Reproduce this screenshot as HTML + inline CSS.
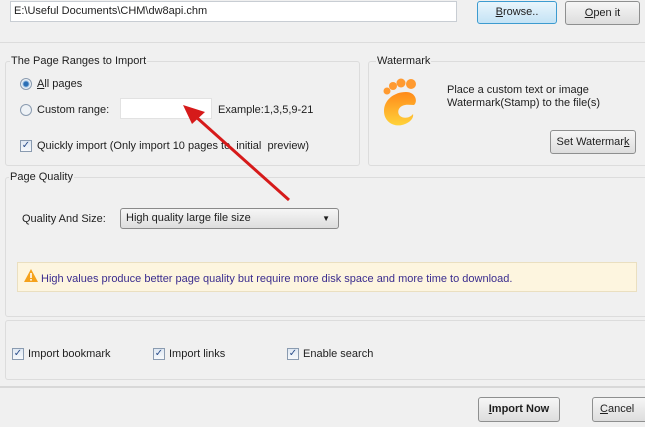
<!DOCTYPE html>
<html><head><meta charset="utf-8"><style>
*{box-sizing:border-box;margin:0;padding:0}
body{width:645px;height:427px;background:#f0f0f0;font-family:"Liberation Sans",sans-serif;font-size:11px;color:#1e1e1e;position:relative;overflow:hidden}
.a{position:absolute}
.box{position:absolute;border:1px solid #dcdcdc;border-radius:3px;background:#f0f0f0}
.btn{position:absolute;border:1px solid #8e8f8f;border-radius:3px;background:linear-gradient(#f6f6f6,#dddddd);text-align:center;font-size:11px}
.inp{position:absolute;background:#fff;border:1px solid #c8cdd3}
.cb{position:absolute;width:12px;height:12px;border:1px solid #8a9bb0;background:linear-gradient(#dfe8f3,#f7f9fb);font-size:10px;line-height:10px;text-align:center;color:#2a4d8a}
.rd{position:absolute;width:12px;height:12px;border:1px solid #8a9bb0;border-radius:50%;background:#eef2f6}
.t{position:absolute;white-space:nowrap}
</style></head><body>
<div class="box" style="left:-3px;top:-5px;width:660px;height:48px"></div>
<div class="inp" style="left:10px;top:1px;width:447px;height:21px"></div>
<div class="t" style="left:14px;top:5px">E:\Useful Documents\CHM\dw8api.chm</div>
<div class="btn" style="left:477px;top:1px;width:80px;height:23px;border-color:#3c9bd0;line-height:21px;background:linear-gradient(#e9f5fc,#c4e3f5)"><u>B</u>rowse..</div>
<div class="btn" style="left:565px;top:1px;width:75px;height:24px;line-height:22px"><u>O</u>pen it</div>

<div class="box" style="left:5px;top:61px;width:355px;height:105px"></div>
<div class="t" style="left:10px;top:55px;background:#f0f0f0;padding:0 1px">The Page Ranges to Import</div>
<div class="rd" style="left:20px;top:78px;background:radial-gradient(#2b6fb5 30%,#a9c9e8 45%,#eef2f6 60%)"></div>
<div class="t" style="left:37px;top:78px"><u>A</u>ll pages</div>
<div class="rd" style="left:20px;top:104px"></div>
<div class="t" style="left:37px;top:104px">Custom range:</div>
<div class="inp" style="left:120px;top:98px;width:92px;height:21px;border-color:#e2e2e2"></div>
<div class="t" style="left:218px;top:104px">Example:1,3,5,9-21</div>
<div class="cb" style="left:20px;top:140px">✓</div>
<div class="t" style="left:37px;top:140px">Quickly import (Only import 10 pages to &nbsp;initial &nbsp;preview)</div>

<div class="box" style="left:368px;top:61px;width:285px;height:105px"></div>
<div class="t" style="left:376px;top:55px;background:#f0f0f0;padding:0 1px">Watermark</div>
<svg class="a" style="left:380px;top:78px" width="40" height="52" viewBox="0 0 40 52">
<defs><linearGradient id="g" x1="0" y1="0" x2="0" y2="1"><stop offset="0" stop-color="#ff8a1a"/><stop offset="1" stop-color="#ffd23a"/></linearGradient></defs>
<circle cx="7" cy="13" r="3.5" fill="#ff9a30"/><circle cx="13" cy="8" r="4" fill="#ff9a30"/><circle cx="21" cy="5" r="4.5" fill="#ff9a30"/><circle cx="31" cy="6" r="5" fill="#ff9a30"/>
<path d="M26 14 C14 14 4 22 4 33 C4 44 14 49 22 47 C30 45 34 40 33 36 C30 40 24 41 20 38 C17 35 18 30 22 28 C26 26 30 27 34 27 C38 24 36 14 26 14Z" fill="url(#g)"/>
</svg>
<div class="t" style="left:447px;top:84px">Place a custom text or image</div>
<div class="t" style="left:447px;top:97px">Watermark(Stamp) to the file(s)</div>
<div class="btn" style="left:550px;top:130px;width:86px;height:24px;line-height:22px">Set Watermar<u>k</u></div>

<div class="box" style="left:5px;top:177px;width:655px;height:140px"></div>
<div class="t" style="left:9px;top:171px;background:#f0f0f0;padding:0 1px">Page Quality</div>
<div class="t" style="left:22px;top:213px">Quality And Size:</div>
<div class="btn" style="left:120px;top:208px;width:219px;height:21px;line-height:19px;text-align:left;padding-left:5px;border-color:#8a8a8a">High quality large file size<span style="position:absolute;right:8px;top:0;font-size:8px">▼</span></div>
<div class="a" style="left:17px;top:262px;width:620px;height:30px;background:#fdf5df;border:1px solid #eadfc0"></div>
<svg class="a" style="left:23px;top:268px" width="16" height="15" viewBox="0 0 16 15"><path d="M8 1 L15 14 L1 14Z" fill="#f5a21c"/><rect x="7.2" y="5" width="1.6" height="5" fill="#fff"/><rect x="7.2" y="11" width="1.6" height="1.6" fill="#fff"/></svg>
<div class="t" style="left:41px;top:273px;color:#3a2c8e">High values produce better page quality but require more disk space and more time to download.</div>

<div class="box" style="left:5px;top:320px;width:655px;height:60px"></div>
<div class="cb" style="left:12px;top:348px">✓</div><div class="t" style="left:28px;top:348px">Import bookmark</div>
<div class="cb" style="left:153px;top:348px">✓</div><div class="t" style="left:169px;top:348px">Import links</div>
<div class="cb" style="left:287px;top:348px">✓</div><div class="t" style="left:303px;top:348px">Enable search</div>
<div class="a" style="left:0;top:386px;width:645px;height:2px;background:#d8d8d8"></div>
<div class="btn" style="left:478px;top:397px;width:82px;height:25px;line-height:23px;font-weight:bold"><u>I</u>mport Now</div>
<div class="btn" style="left:592px;top:397px;width:60px;height:25px;line-height:23px;text-align:left;padding-left:7px"><u>C</u>ancel</div>

<svg class="a" style="left:0;top:0" width="645" height="427"><path d="M289 200 L195 116" stroke="#d61a1a" stroke-width="3"/><path d="M183 105 L205 112 L192 124Z" fill="#d61a1a"/></svg>
</body></html>
